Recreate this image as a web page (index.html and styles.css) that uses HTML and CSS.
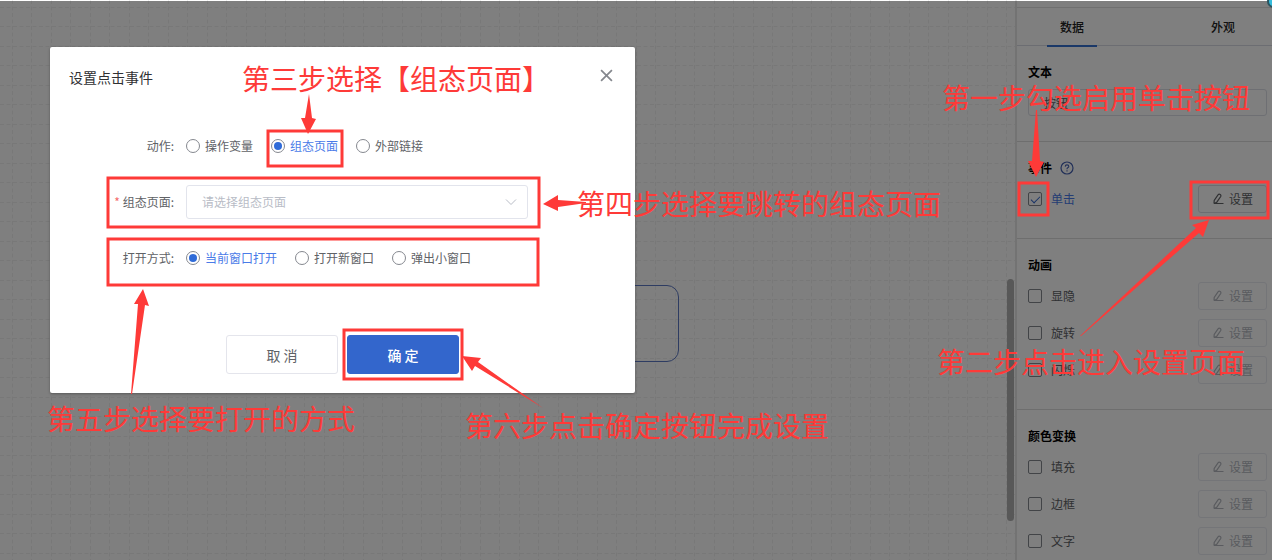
FILE: index.html
```html
<!doctype html>
<html lang="zh-CN">
<head>
	<meta charset="utf-8">
	<title>设置点击事件</title>
	<meta name="viewport" content="width=device-width, initial-scale=1">
	<link rel="stylesheet" href="styles.css">
</head>
<body>
	<svg class="sprite" aria-hidden="true">
		<symbol id="icon-edit" viewBox="0 0 12 12">
			<path d="M2 10.500L2.200 7.500L6 1.800Q7 0.700 8.200 1.500Q9.300 2.300 8.700 3.500L4.800 9.200L2 10.500H11.500" fill="none" stroke="currentColor" stroke-width="1.200"/>
		</symbol>
	</svg>

	<div class="editor">
		<main class="canvas">
			<svg class="grid" width="100%" height="100%" aria-hidden="true">
				<defs>
					<pattern id="grid-lines" width="39" height="39" patternUnits="userSpaceOnUse">
						<path d="M12.5 0V39M31.500 0V39M0 7.500H39M0 26.500H39" fill="none" stroke="#f0f0f0" stroke-dasharray="4 2.500"/>
					</pattern>
				</defs>
				<rect width="100%" height="100%" fill="url(#grid-lines)"/>
			</svg>
			<div class="node"></div>
			<div class="scrollbar"></div>
		</main>

		<aside class="panel">
			<nav class="tabs">
				<button class="tab active" type="button">数据</button>
				<button class="tab" type="button">外观</button>
			</nav>
			<section class="group">
				<h2><label for="text">文本</label></h2>
				<input class="text-input" id="text" type="text" value="按钮">
			</section>
			<section class="group">
				<h2>事件
					<svg class="help" viewBox="0 0 14 14" aria-hidden="true">
						<circle cx="7" cy="7" r="6" fill="none" stroke="currentColor" stroke-width="1.200"/>
						<path d="M5.200 5.600Q5.300 3.900 7 3.900Q8.800 3.900 8.800 5.400Q8.800 6.300 7.700 6.800Q7 7.200 7 8.200M7 9.300V10.500" fill="none" stroke="currentColor" stroke-width="1.100"/>
					</svg>
				</h2>
				<div class="row">
					<label class="check"><input type="checkbox" checked><span>单击</span></label>
					<button class="set" type="button"><svg><use href="#icon-edit"/></svg>设置</button>
				</div>
			</section>
			<section class="group">
				<h2>动画</h2>
				<div class="row">
					<label class="check"><input type="checkbox"><span>显隐</span></label>
					<button class="set" type="button" disabled><svg><use href="#icon-edit"/></svg>设置</button>
				</div>
				<div class="row">
					<label class="check"><input type="checkbox"><span>旋转</span></label>
					<button class="set" type="button" disabled><svg><use href="#icon-edit"/></svg>设置</button>
				</div>
				<div class="row">
					<label class="check"><input type="checkbox"><span>闪烁</span></label>
					<button class="set" type="button" disabled><svg><use href="#icon-edit"/></svg>设置</button>
				</div>
			</section>
			<section class="group">
				<h2>颜色变换</h2>
				<div class="row">
					<label class="check"><input type="checkbox"><span>填充</span></label>
					<button class="set" type="button" disabled><svg><use href="#icon-edit"/></svg>设置</button>
				</div>
				<div class="row">
					<label class="check"><input type="checkbox"><span>边框</span></label>
					<button class="set" type="button" disabled><svg><use href="#icon-edit"/></svg>设置</button>
				</div>
				<div class="row">
					<label class="check"><input type="checkbox"><span>文字</span></label>
					<button class="set" type="button" disabled><svg><use href="#icon-edit"/></svg>设置</button>
				</div>
			</section>
		</aside>
	</div>

	<div class="mask"></div>
	<div class="badge"></div>

	<form class="dialog" role="dialog" aria-labelledby="dialog-title">
		<header class="dialog-header">
			<h1 id="dialog-title">设置点击事件</h1>
			<button class="close" type="button" aria-label="关闭">
				<svg viewBox="0 0 12 12"><path d="M1 1L11 11M11 1L1 11" stroke="currentColor" stroke-width="1.600"/></svg>
			</button>
		</header>
		<div class="fields">
			<div class="field" role="radiogroup" aria-labelledby="label-action">
				<span class="label" id="label-action">动作:</span>
				<div class="radios">
					<label class="radio"><input type="radio" name="action"><span>操作变量</span></label>
					<label class="radio"><input type="radio" name="action" checked><span>组态页面</span></label>
					<label class="radio"><input type="radio" name="action"><span>外部链接</span></label>
				</div>
			</div>
			<div class="field">
				<label class="label" for="page"><span class="required">*</span> 组态页面:</label>
				<div class="select">
					<select id="page"><option>请选择组态页面</option></select>
					<svg viewBox="0 0 12 12" aria-hidden="true"><path d="M1 3.500L6 8.500L11 3.500" fill="none" stroke="currentColor"/></svg>
				</div>
			</div>
			<div class="field" role="radiogroup" aria-labelledby="label-open">
				<span class="label" id="label-open">打开方式:</span>
				<div class="radios">
					<label class="radio"><input type="radio" name="open" checked><span>当前窗口打开</span></label>
					<label class="radio"><input type="radio" name="open"><span>打开新窗口</span></label>
					<label class="radio"><input type="radio" name="open"><span>弹出小窗口</span></label>
				</div>
			</div>
		</div>
		<footer class="actions">
			<button class="btn" type="button">取 消</button>
			<button class="btn primary" type="button">确 定</button>
		</footer>
	</form>

	<!-- steps 3 to 6, around the dialog -->
	<svg class="guide guide-left" width="960" height="560" viewBox="0 0 960 560">
		<rect x="268" y="131" width="74" height="35"/>
		<rect x="108" y="178" width="431" height="49"/>
		<rect x="108" y="239" width="430" height="46"/>
		<rect x="344" y="330" width="118" height="49"/>
		<path d="M309 94L312 118L316 119L308 134L301 118L305 118Z"/>
		<path d="M543 204L558 195L558 200L586 202L586 203L558 207L558 211Z"/>
		<path d="M143 289L149 306L145 305L132 394L131 394L138 304L134 304Z"/>
		<path d="M462 356L481 358L478 362L543 408L475 366L472 371Z"/>
		<text x="242" y="90">第三步选择【组态页面】</text>
		<text x="577" y="215">第四步选择要跳转的组态页面</text>
		<text x="47" y="430">第五步选择要打开的方式</text>
		<text x="465" y="437">第六步点击确定按钮完成设置</text>
	</svg>

	<!-- steps 1 and 2, around the side panel -->
	<svg class="guide guide-right" width="340" height="560" viewBox="932 0 340 560">
		<rect x="1019" y="183" width="29" height="32"/>
		<rect x="1191" y="182" width="77" height="36"/>
		<path d="M1036 110L1037 110L1040 161L1044 162L1036 177L1028 161L1032 161Z"/>
		<path d="M1209 220L1203 237L1199 233L1081 336L1080 336L1196 228L1192 225Z"/>
		<text x="942" y="109">第一步勾选启用单击按钮</text>
		<text x="937" y="373">第二步点击进入设置页面</text>
	</svg>
</body>
</html>
```

FILE: styles.css
```css
* {
	box-sizing: border-box;
}
body {
	margin: 0;
	position: relative;
	height: 100vh;
	overflow: hidden;
	background: #fff;
	color: #606266;
	font: 12px/18px "Noto Sans CJK SC", sans-serif;
}
button, input, select {
	font: inherit;
	color: inherit;
	margin: 0;
}
h1, h2 {
	margin: 0;
}
.sprite {
	position: absolute;
	width: 0;
	height: 0;
}

/* editor */
.editor {
	display: flex;
	height: 100%;
}
.canvas {
	flex: 1;
	position: relative;
	overflow: hidden;
}
.grid {
	display: block;
}
.node {
	position: absolute;
	left: 440px;
	top: 285px;
	width: 239px;
	height: 77px;
	border: 1px solid #5c78c4;
	border-radius: 12px;
}
.scrollbar {
	position: absolute;
	right: 1px;
	top: 279px;
	width: 7px;
	height: 242px;
	border-radius: 4px;
	background: #b0b0b0;
}

/* side panel */
.panel {
	flex: none;
	width: 257px;
	padding-top: 7px;
	border-left: 2px solid #e6e6e6;
	background: #fff;
}
.tabs {
	display: flex;
	justify-content: space-between;
	height: 39px;
	padding: 0 24px 0 30px;
	border-top: 1px solid #e0e0e0;
	border-bottom: 1px solid #d8dae4;
}
.tab {
	width: 50px;
	height: 39px;
	padding: 0;
	border: 0;
	border-bottom: 2px solid transparent;
	background: none;
	color: #222;
	font-weight: 500;
}
.tab.active {
	border-color: #3470d0;
}
.group {
	display: flex;
	flex-direction: column;
	gap: 9px;
	padding: 17px 5px 25px 11px;
	border-bottom: 1px solid #dcdcdc;
}
.group h2 {
	display: flex;
	align-items: center;
	gap: 8px;
	height: 18px;
	margin-bottom: -1px;
	color: #000;
	font-size: 12px;
	font-weight: 700;
}
.help {
	width: 14px;
	height: 14px;
	color: #4460b0;
}
.text-input {
	width: 100%;
	height: 27px;
	padding: 0 15px;
	border: 1px solid #dcdfe6;
	border-radius: 3px;
	background: #fff;
}
.row {
	display: flex;
	align-items: center;
	justify-content: space-between;
}
.check {
	display: flex;
	align-items: center;
	gap: 9px;
}
.check input {
	appearance: none;
	display: grid;
	place-items: center;
	width: 14px;
	height: 14px;
	border: 1px solid #85888f;
	border-radius: 2px;
}
.check input:checked::after {
	content: "";
	width: 8px;
	height: 4px;
	border: solid #3366cc;
	border-width: 0 0 1px 1px;
	transform: translateY(-1px) rotate(-45deg);
}
.check input:checked + span,
.radio input:checked + span {
	color: #4a7be8;
}
.set {
	display: flex;
	align-items: center;
	justify-content: center;
	gap: 5px;
	width: 69px;
	height: 28px;
	padding: 0;
	border: 1px solid #d8dbe2;
	border-radius: 3px;
	background: #fff;
}
.set svg {
	width: 12px;
	height: 12px;
}
.set:disabled {
	color: #b4b7be;
	border-color: #e8eaf0;
}

.mask {
	position: absolute;
	inset: 1px 0 0;
	background: rgba(0, 0, 0, .5);
}
.badge {
	position: absolute;
	top: -5px;
	right: -8px;
	width: 13px;
	height: 13px;
	border: 2px solid #2a5560;
	border-radius: 50%;
	background: #35bcdc;
}

/* dialog */
.dialog {
	position: absolute;
	left: 50px;
	top: 47px;
	width: 585px;
	padding: 20px 0 19px;
	border-radius: 2px;
	background: #fff;
	box-shadow: 0 1px 3px rgba(0, 0, 0, .3);
}
.dialog-header {
	display: flex;
	justify-content: space-between;
	align-items: center;
	height: 20px;
	padding: 0 20px 0 19px;
}
.dialog-header h1 {
	color: #303133;
	font-size: 14px;
	font-weight: 400;
}
.close {
	display: flex;
	padding: 0 2px 4px;
	border: 0;
	background: none;
	color: #85888e;
}
.close svg {
	width: 13px;
	height: 13px;
}
.fields {
	display: flex;
	flex-direction: column;
	gap: 29px;
	margin: 49px 0 67px;
}
.field {
	display: flex;
	align-items: center;
	min-height: 20px;
}
.label {
	flex: none;
	width: 136px;
	padding-right: 12px;
	text-align: right;
}
.required {
	color: #f56c6c;
}
.radios {
	display: flex;
	gap: 18px;
}
.radio {
	display: flex;
	align-items: center;
	gap: 5px;
}
.radio input {
	appearance: none;
	display: grid;
	place-items: center;
	width: 14px;
	height: 14px;
	border: 1px solid #85888f;
	border-radius: 50%;
}
.radio input:checked::after {
	content: "";
	width: 8px;
	height: 8px;
	border-radius: 50%;
	background: #2f6bd8;
}
.select {
	position: relative;
	flex: 1;
	margin-right: 107px;
}
.select select {
	appearance: none;
	display: block;
	width: 100%;
	height: 34px;
	padding: 0 15px;
	border: 1px solid #e2e4ec;
	border-radius: 3px;
	background: #fff;
	color: #b8bcc6;
}
.select svg {
	position: absolute;
	right: 11px;
	top: 11px;
	width: 12px;
	height: 12px;
	color: #b8bcc6;
	pointer-events: none;
}
.actions {
	display: flex;
	justify-content: center;
	gap: 9px;
}
.btn {
	width: 112px;
	height: 39px;
	padding: 0;
	border: 1px solid #e4e5ec;
	border-radius: 3px;
	background: #fff;
	font-size: 14px;
}
.btn.primary {
	border-color: #3366cc;
	background: #3366cc;
	color: #fff;
	font-weight: 500;
}

/* step-by-step guide */
.guide {
	position: absolute;
	top: 0;
	pointer-events: none;
}
.guide-left {
	left: 0;
}
.guide-right {
	right: 0;
}
.guide rect {
	fill: none;
	stroke: #fe3a38;
	stroke-width: 3px;
}
.guide path {
	fill: #fe3a38;
}
.guide text {
	fill: #fe3a38;
	font-size: 28px;
}
```
